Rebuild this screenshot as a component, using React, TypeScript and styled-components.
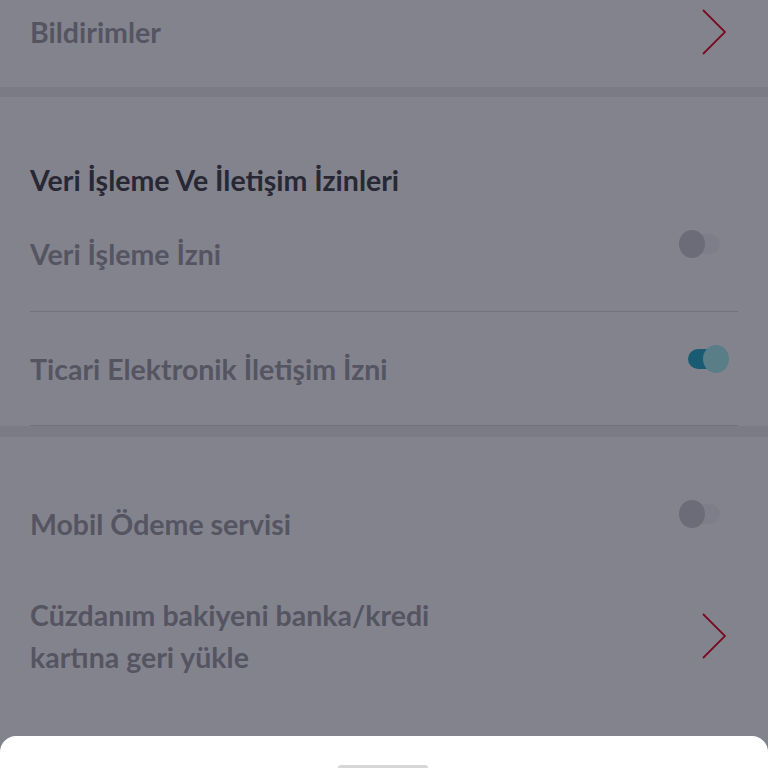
import styled, { createGlobalStyle } from "styled-components";

const GlobalStyle = createGlobalStyle`
  html, body {
    margin: 0;
    padding: 0;
    background: #ffffff;
    font-family: Lato, "Noto Sans", "DejaVu Sans", sans-serif;
    -webkit-font-smoothing: antialiased;
  }
  * {
    box-sizing: border-box;
  }
`;

const Page = styled.div`
  width: 768px;
  min-height: 768px;
  background: #ffffff;
  overflow: hidden;
`;

const Section = styled.section<{ $top?: number; $bottom?: number }>`
  display: flex;
  flex-direction: column;
  padding-top: ${(p) => p.$top ?? 0}px;
  padding-bottom: ${(p) => p.$bottom ?? 0}px;
`;

const Band = styled.div<{ $h: number }>`
  height: ${(p) => p.$h}px;
  background: #eeeef1;
`;

const SectionTitle = styled.h2`
  margin: 0 30px;
  font-size: 28.5px;
  line-height: 34px;
  font-weight: 700;
  color: #48484f;
`;

const Row = styled.div<{ $h: number; $divider?: boolean }>`
  margin: 0 30px;
  height: ${(p) => p.$h}px;
  display: flex;
  align-items: center;
  justify-content: space-between;
  border-bottom: ${(p) => (p.$divider ? "1px solid #dcdce0" : "none")};
`;

const Label = styled.span`
  font-size: 28.5px;
  line-height: 42px;
  font-weight: 700;
  color: #a2a2a9;
  max-width: 420px;
`;

const ToggleTrack = styled.div<{ $on: boolean }>`
  position: relative;
  width: 50px;
  height: 28px;
  margin-right: 9px;
  margin-bottom: 20px;
  flex-shrink: 0;

  &::before {
    content: "";
    position: absolute;
    left: 9px;
    right: 9px;
    top: 4px;
    height: 20px;
    border-radius: 10px;
    background: ${(p) => (p.$on ? "#2aaecb" : "#f4f4f8")};
  }
`;

const ToggleKnob = styled.span<{ $on: boolean }>`
  position: absolute;
  top: 0;
  left: ${(p) => (p.$on ? 24 : 0)}px;
  width: 26px;
  height: 28px;
  border-radius: 50%;
  background: ${(p) => (p.$on ? "#acf4f4" : "#d0d0d6")};
`;

const ChevronBox = styled.span`
  display: flex;
  margin-right: 12px;
  flex-shrink: 0;
`;

const Dim = styled.div`
  position: fixed;
  inset: 0;
  background: rgba(8, 8, 28, 0.5);
`;

const Sheet = styled.div`
  position: fixed;
  left: 0;
  right: 0;
  top: 736px;
  height: 320px;
  background: #ffffff;
  border-radius: 16px 16px 0 0;
  display: flex;
  justify-content: center;
  padding-top: 29px;
`;

const Handle = styled.div`
  width: 90px;
  height: 6px;
  border-radius: 3px;
  background: #d6d6d8;
  margin-left: -2px;
`;

const Chevron = () => (
  <ChevronBox>
    <svg width="24" height="46" viewBox="0 0 24 46" fill="none">
      <polyline
        points="1,1 23,23 1,45"
        stroke="#e8102a"
        strokeWidth="1.8"
        strokeLinejoin="miter"
      />
    </svg>
  </ChevronBox>
);

const Toggle = ({ on }: { on: boolean }) => (
  <ToggleTrack $on={on}>
    <ToggleKnob $on={on} />
  </ToggleTrack>
);

export default function App() {
  return (
    <>
      <GlobalStyle />
      <Page>
        <Section $bottom={23}>
          <Row $h={64}>
            <Label>Bildirimler</Label>
            <Chevron />
          </Row>
        </Section>
        <Band $h={10} />
        <Section $top={66}>
          <SectionTitle>Veri İşleme Ve İletişim İzinleri</SectionTitle>
          <Row $h={115} $divider>
            <Label>Veri İşleme İzni</Label>
            <Toggle on={false} />
          </Row>
          <Row $h={114} $divider>
            <Label>Ticari Elektronik İletişim İzni</Label>
            <Toggle on={true} />
          </Row>
        </Section>
        <Band $h={11} />
        <Section $top={30}>
          <Row $h={114}>
            <Label>Mobil Ödeme servisi</Label>
            <Toggle on={false} />
          </Row>
          <Row $h={110}>
            <Label>Cüzdanım bakiyeni banka/kredi kartına geri yükle</Label>
            <Chevron />
          </Row>
        </Section>
      </Page>
      <Dim />
      <Sheet>
        <Handle />
      </Sheet>
    </>
  );
}
